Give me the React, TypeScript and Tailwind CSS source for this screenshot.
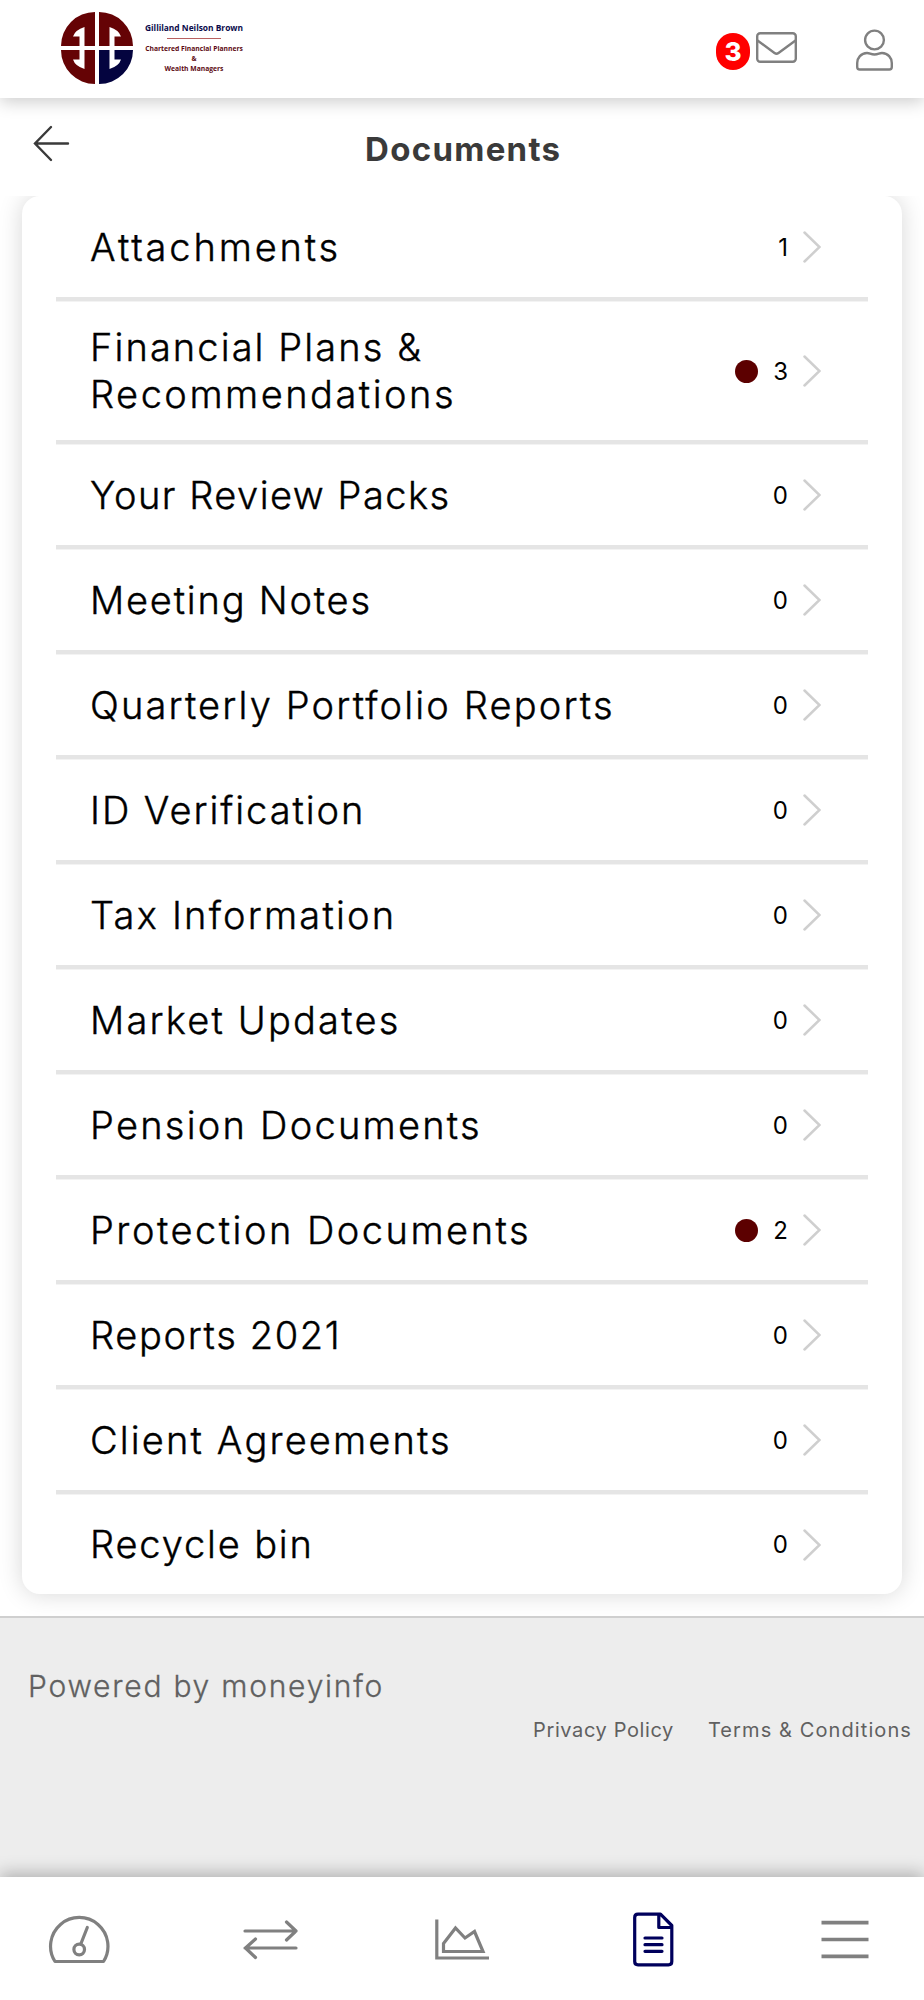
import React from 'react';

interface Folder {
  lines: { text: string; tracking: string }[];
  count: number;
  unread?: boolean;
}

const folders: Folder[] = [
  { lines: [{ text: 'Attachments', tracking: 'tracking-[2.85px]' }], count: 1 },
  {
    lines: [
      { text: 'Financial Plans &', tracking: 'tracking-[2.1px]' },
      { text: 'Recommendations', tracking: 'tracking-[2.5px]' },
    ],
    count: 3,
    unread: true,
  },
  { lines: [{ text: 'Your Review Packs', tracking: 'tracking-[1.5px]' }], count: 0 },
  { lines: [{ text: 'Meeting Notes', tracking: 'tracking-[1.8px]' }], count: 0 },
  { lines: [{ text: 'Quarterly Portfolio Reports', tracking: 'tracking-[2.15px]' }], count: 0 },
  { lines: [{ text: 'ID Verification', tracking: 'tracking-[1.95px]' }], count: 0 },
  { lines: [{ text: 'Tax Information', tracking: 'tracking-[2.2px]' }], count: 0 },
  { lines: [{ text: 'Market Updates', tracking: 'tracking-[2.2px]' }], count: 0 },
  { lines: [{ text: 'Pension Documents', tracking: 'tracking-[2.25px]' }], count: 0 },
  { lines: [{ text: 'Protection Documents', tracking: 'tracking-[2.5px]' }], count: 2, unread: true },
  { lines: [{ text: 'Reports 2021', tracking: 'tracking-[1.65px]' }], count: 0 },
  { lines: [{ text: 'Client Agreements', tracking: 'tracking-[2.15px]' }], count: 0 },
  { lines: [{ text: 'Recycle bin', tracking: 'tracking-[1.85px]' }], count: 0 },
];

const quadrant = 'M0 34 A34 34 0 0 1 34 0 V34 H23.500 V15 Q14 18 12 24.500 H18.500 V34 Z';

function Logo() {
  return (
    <div className="flex items-center pb-[2px]">
      <svg width="72" height="72" viewBox="0 0 72 72">
        <path d={quadrant} fill="#650305" />
        <path d={quadrant} fill="#650305" transform="translate(72 0) scale(-1 1)" />
        <path d={quadrant} fill="#650305" transform="translate(0 72) scale(1 -1)" />
        <path d={quadrant} fill="#04043f" transform="translate(72 72) scale(-1 -1)" />
      </svg>
      <div className="ml-[11px] flex w-[100px] flex-col items-center whitespace-nowrap font-['Open_Sans',sans-serif] text-[6.75px] font-bold leading-[9.7px] text-[#5c0a12]">
        <p className="text-[8.4px] text-[#0a0a4a]">Gilliland Neilson Brown</p>
        <div className="mt-[6px] mb-[5px] h-px w-[54px] bg-[#b86060]" />
        <p>Chartered Financial Planners</p>
        <p>&amp;</p>
        <p>Wealth Managers</p>
      </div>
    </div>
  );
}

function Header() {
  return (
    <header className="relative z-10 flex h-[98px] items-center bg-white pl-[61px] pr-[31px] shadow-[0_4px_16px_rgba(0,0,0,0.2)]">
      <Logo />
      <div className="ml-auto flex items-center pb-px">
        <span className="mt-[6px] flex h-[37px] w-[34px] items-center justify-center rounded-[17px] bg-[#ff0000] text-[26px] font-extrabold text-white">
          3
        </span>
        <svg className="-mt-[2px] ml-[6px]" width="41" height="32" viewBox="0 0 41 32" fill="none" stroke="#808080" strokeWidth="2.400">
          <rect x="1.2" y="1.2" width="38.6" height="28.6" rx="3" />
          <path d="M1.5 8.5 L18.5 21 Q20.5 22.5 22.5 21 L39.5 8.5" />
        </svg>
        <svg className="ml-[59px] mt-[2px]" width="37" height="42" viewBox="0 0 37 42" fill="none" stroke="#808080" strokeWidth="2.400">
          <circle cx="18.5" cy="11" r="9.4" />
          <path d="M11 24 C14 24 14.500 25.500 18.500 25.500 C22.500 25.500 23 24 26 24 C32 24 35.800 29 35.800 34 V38 Q35.800 40.500 33.300 40.500 H3.700 Q1.200 40.500 1.200 38 V34 C1.200 29 5 24 11 24 Z" />
        </svg>
      </div>
    </header>
  );
}

function FolderRow({ folder }: { folder: Folder }) {
  return (
    <li className="flex min-h-[105px] items-center border-b-4 border-[#e5e5e5] pl-[34px] pr-[47px] shadow-[0_1px_0_#f3f3f3] last:min-h-[100px] last:border-b-0 last:shadow-none">
      <div className="pt-[23px] pb-[22px] text-[38px] leading-[47px] font-light whitespace-nowrap text-black [-webkit-text-stroke:0.4px_black]">
        {folder.lines.map((line) => (
          <p key={line.text} className={line.tracking}>
            {line.text}
          </p>
        ))}
      </div>
      <div className="ml-auto flex items-center pt-px">
        {folder.unread && <span className="mr-[15px] size-[23px] rounded-full bg-[#5c0000]" />}
        <span className="pt-px text-[24px] leading-none text-black">{folder.count}</span>
        <svg className="ml-[15px]" width="18" height="32" viewBox="0 0 18 32" fill="none" stroke="#cfcfcf" strokeWidth="2.500" strokeLinecap="round">
          <path d="M1.500 1.500 L16.500 16 L1.500 30.500" />
        </svg>
      </div>
    </li>
  );
}

function BottomNav() {
  return (
    <nav className="relative z-10 flex h-[123px] items-center bg-white pl-[48px] shadow-[0_-4px_16px_rgba(0,0,0,0.25)]">
      <svg width="62" height="60" viewBox="48 1909 62 60" fill="none" stroke="#808080" strokeWidth="3.200" strokeLinecap="round" strokeLinejoin="round">
        <path d="M55 1961.500 A28.700 28.700 0 1 1 103.500 1961.500 Z" />
        <circle cx="79.200" cy="1949.500" r="5.300" />
        <path d="M81 1943.500 L87.300 1927.500" />
      </svg>
      <svg className="ml-[132px]" width="56" height="60" viewBox="242 1909 56 60" fill="none" stroke="#808080" strokeWidth="3.200" strokeLinecap="round" strokeLinejoin="round">
        <path d="M245 1931 H296 M286.500 1922 L296 1931 L286.500 1940 M296 1948 H245 M255.500 1939 L245.500 1948 L255.500 1957.500" />
      </svg>
      <svg className="ml-[136px]" width="56" height="60" viewBox="434 1909 56 60" fill="none" stroke="#808080" strokeWidth="3.200">
        <path d="M436.800 1919.500 V1958 H489 M443.500 1951.500 V1943.500 L455.500 1928 L465 1938 L474.500 1931.500 L483 1951.500 Z" />
      </svg>
      <svg className="ml-[142px]" width="42" height="60" viewBox="632 1909 42 60" fill="none" stroke="#00005c" strokeWidth="3.200" strokeLinecap="round" strokeLinejoin="round">
        <path d="M638 1914.200 H660.500 L671.800 1925.500 V1961.500 Q671.800 1964.800 668.500 1964.800 H638 Q634.700 1964.800 634.700 1961.500 V1917.500 Q634.700 1914.200 638 1914.200 Z M658.800 1915 V1927.500 H671.500" />
        <path d="M645 1938 H662 M645 1944.700 H662 M645 1951.300 H662" />
      </svg>
      <svg className="ml-[146px]" width="50" height="60" viewBox="820 1909 50 60" fill="none" stroke="#808080" strokeWidth="3.700">
        <path d="M821.500 1922.700 H868.500 M821.500 1939.500 H868.500 M821.500 1956.300 H868.500" />
      </svg>
    </nav>
  );
}

export default function App() {
  return (
    <div className="flex h-[2000px] w-[924px] flex-col overflow-hidden bg-white font-[Inter,sans-serif]">
      <Header />
      <div className="flex h-[98px] items-center">
        <svg className="ml-[33px] -mt-[8px]" width="37" height="37" viewBox="0 0 37 37" fill="none" stroke="#3a3a3a" strokeWidth="2.400" strokeLinecap="round">
          <path d="M18 2 L2 18.500 L18 35 M2 18.500 H35" />
        </svg>
        <h1 className="ml-[295px] mt-[6px] text-[33px] font-bold tracking-[1.3px] text-[#3a3a3a]">Documents</h1>
      </div>
      <main className="h-[1420px] overflow-hidden">
        <ul className="mx-[22px] rounded-[18px] bg-white px-[34px] shadow-[0_0_24px_rgba(0,0,0,0.16)]">
          {folders.map((folder) => (
            <FolderRow key={folder.lines[0].text} folder={folder} />
          ))}
        </ul>
      </main>
      <footer className="flex h-[261px] flex-col border-t-2 border-[#cfcfcf] bg-[#ededed] text-[#606060]">
        <p className="ml-[28px] mt-[50px] text-[30px] leading-[36px] font-light tracking-[1.75px] [-webkit-text-stroke:0.3px_#606060]">
          Powered by moneyinfo
        </p>
        <div className="mt-[14px] mr-[12px] flex justify-end gap-[34px] text-[20px] leading-[24px]">
          <span className="tracking-[0.6px]">Privacy Policy</span>
          <span className="tracking-[1.1px]">Terms &amp; Conditions</span>
        </div>
      </footer>
      <BottomNav />
    </div>
  );
}
